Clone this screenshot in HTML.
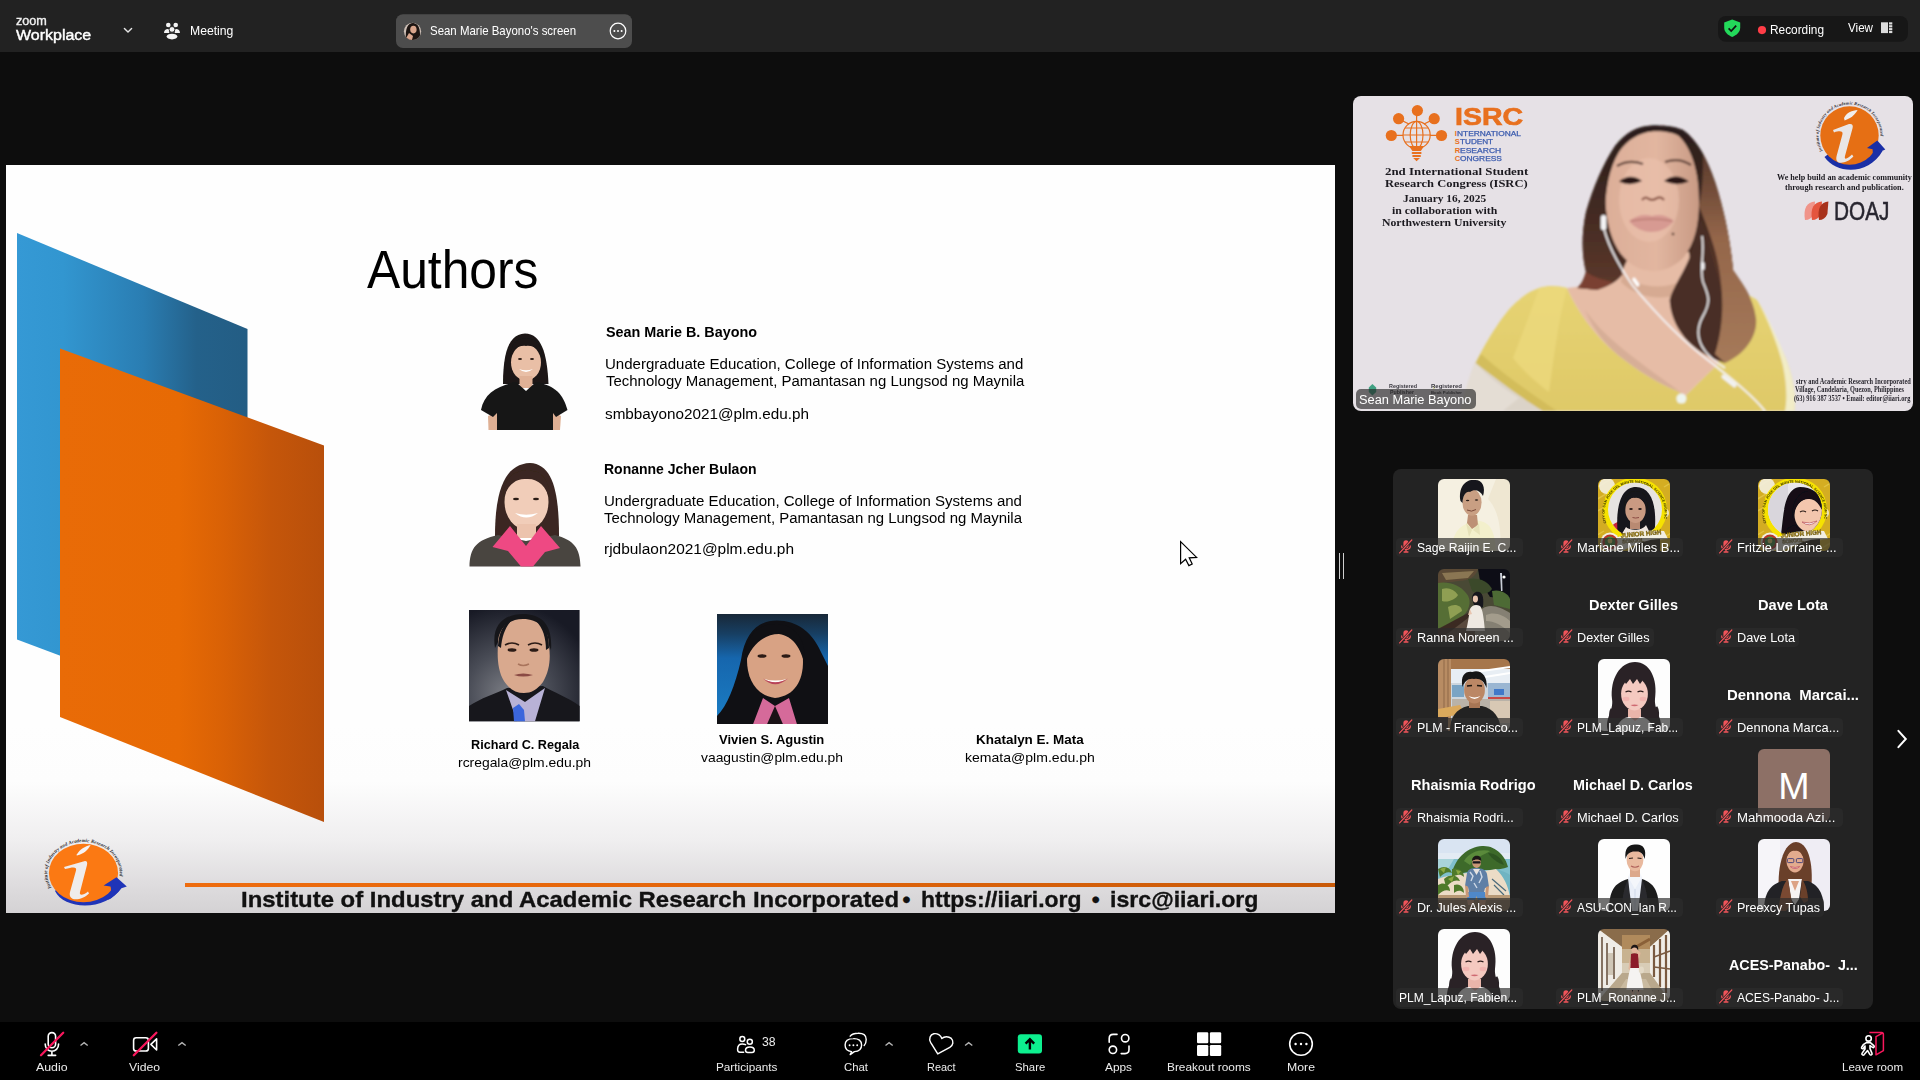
<!DOCTYPE html>
<html lang="en">
<head>
<meta charset="utf-8">
<title>Zoom Meeting</title>
<style>
*{margin:0;padding:0;box-sizing:border-box}
html,body{width:1920px;height:1080px;overflow:hidden;background:#0d0d0d;font-family:"Liberation Sans",sans-serif;color:#fff}
.abs,.t{position:absolute}
.t{white-space:pre;line-height:1;transform-origin:0 0}
#topbar{position:absolute;left:0;top:0;width:1920px;height:52px;background:#222222}
#bottombar{position:absolute;left:0;top:1022px;width:1920px;height:58px;background:#000}
#slide{position:absolute;left:6px;top:165px;width:1329px;height:748px;background:#fefefe;overflow:hidden;color:#000}
#speaker{position:absolute;left:1353px;top:96px;width:560px;height:315px;border-radius:8px;background:#e6e1e6;overflow:hidden;color:#000}
#gallery{position:absolute;left:1393px;top:469px;width:480px;height:540px;border-radius:8px;background:#232323}
.tile{position:absolute;width:160px;height:90px}
.av{position:absolute;left:45px;top:9.5px;width:72px;height:72px;border-radius:6px;overflow:hidden}
.lbl{position:absolute;left:3px;top:68.8px;height:19px;border-radius:4.5px;background:rgba(44,44,44,.68)}
.big{position:absolute;left:0;width:160px;top:27px;text-align:center;font-weight:bold;font-size:15px;line-height:18px;white-space:nowrap;color:#fff}
.bt{position:absolute;top:1061px;font-size:12.5px;line-height:14px;color:#e0e0e0;white-space:nowrap;text-align:center}
</style>
</head>
<body>
<!--TOPBAR-->
<div id="topbar">
<span class="t" style="left:15.80px;top:15px;font-size:12.9px;color:#f2f2f2;transform:scaleX(0.9800);-webkit-text-stroke:.35px #f2f2f2;">zoom</span>
<span class="t" style="left:15.80px;top:28px;font-size:14.9px;color:#fff;transform:scaleX(1.0731);-webkit-text-stroke:.4px #fff;">Workplace</span>
<svg class="abs" style="left:0;top:0" width="1920" height="52" viewBox="0 0 1920 52"><path d="M124.4 28.4 L128 32 L131.6 28.4" stroke="#e6e6e6" stroke-width="1.4" fill="none" stroke-linecap="round" stroke-linejoin="round"/><circle cx="168.3" cy="25" r="2.3" fill="#f4f4f4"/><circle cx="175.7" cy="25" r="2.3" fill="#f4f4f4"/><path d="M164 32.8 C164 30.4 165.6 29 168 29 C169 29 169.2 29.6 169 30.4 C168.8 31.6 169 32.4 169.6 33 H164.4Z M180 32.8 C180 30.4 178.4 29 176 29 C175 29 174.8 29.6 175 30.4 C175.2 31.6 175 32.4 174.4 33 H179.6Z" fill="#f4f4f4"/><circle cx="172" cy="29.4" r="2.9" fill="#f4f4f4" stroke="#222" stroke-width=".9"/><ellipse cx="172" cy="36.6" rx="5.4" ry="2.8" fill="#f4f4f4"/><rect x="396" y="14.2" width="236" height="33.8" rx="7" fill="#4d4d4d"/><clipPath id="avc"><circle cx="412.5" cy="31.3" r="8.6"/></clipPath><g clip-path="url(#avc)"><rect x="403" y="22" width="20" height="20" fill="#cdbfb6"/><path d="M406 40 C405 28 408 23 413 23 C418 23 420 28 420 34 L421 40Z" fill="#1d1512"/><ellipse cx="413.4" cy="29.6" rx="3.2" ry="3.8" fill="#d9a58c"/><path d="M405 40 L409 33 L413 36 L412 40Z" fill="#d9a58c"/></g><circle cx="618" cy="31" r="7.8" stroke="#fff" stroke-width="1.2" fill="none"/><circle cx="614.4" cy="31" r="1" fill="#fff"/><circle cx="618" cy="31" r="1" fill="#fff"/><circle cx="621.6" cy="31" r="1" fill="#fff"/><rect x="1718" y="16" width="190" height="25.8" rx="8" fill="#171717"/><path d="M1732.2 19.6 L1740.2 22.6 V27.6 C1740.2 32.2 1736.6 35.4 1732.2 36.9 C1727.8 35.4 1724.2 32.2 1724.2 27.6 V22.6Z" fill="#23d95a"/><path d="M1728.6 28.4 L1731.2 31 L1736.2 25.6" stroke="#111" stroke-width="1.7" fill="none"/><circle cx="1762" cy="30.1" r="4.1" fill="#ff3d47"/><rect x="1881" y="22.3" width="7" height="10.8" fill="#dcdcdc"/><rect x="1889" y="22.3" width="3.3" height="2.2" fill="#dcdcdc"/><rect x="1889" y="25.2" width="3.3" height="2.2" fill="#dcdcdc"/><rect x="1889" y="28.1" width="3.3" height="2.2" fill="#dcdcdc"/><rect x="1889" y="31" width="3.3" height="2.1" fill="#dcdcdc"/></svg>
<span class="t" style="left:190.40px;top:25px;font-size:12.8px;transform:scaleX(0.9532);">Meeting</span>
<span class="t" style="left:430.00px;top:25px;font-size:12.4px;transform:scaleX(0.9239);">Sean Marie Bayono's screen</span>
<span class="t" style="left:1770.00px;top:24px;font-size:12.6px;transform:scaleX(0.9407);">Recording</span>
<span class="t" style="left:1848.00px;top:22px;font-size:12.6px;transform:scaleX(0.9233);">View</span>
</div>
<!--SLIDE-->
<div id="slide">
<div class="abs" style="left:0;top:560px;width:1329px;height:188px;background:linear-gradient(#fefefe 0%,#fdfdfd 30%,#efeeef 62%,#dedcde 85%,#d4d2d4 100%)"></div>
<svg class="abs" style="left:0;top:0" width="340" height="748" viewBox="6 165 340 748">
<defs>
<linearGradient id="gb" x1="17" x2="247" y1="0" y2="0" gradientUnits="userSpaceOnUse"><stop offset="0" stop-color="#3599d5"/><stop offset=".2" stop-color="#3296d0"/><stop offset=".55" stop-color="#2a7db2"/><stop offset=".78" stop-color="#24618a"/><stop offset="1" stop-color="#235d84"/></linearGradient>
<linearGradient id="go" x1="60" x2="324" y1="0" y2="0" gradientUnits="userSpaceOnUse"><stop offset="0" stop-color="#e96b07"/><stop offset=".45" stop-color="#e76a04"/><stop offset=".62" stop-color="#d96106"/><stop offset=".8" stop-color="#c5560a"/><stop offset="1" stop-color="#b84f0b"/></linearGradient>
</defs>
<polygon points="17,233 247.5,329 247.5,726 17,639.5" fill="url(#gb)"/>
<polygon points="60,348.5 324,445.5 324,822 60,717" fill="url(#go)"/>
</svg>
<div class="abs" style="left:179px;top:717.8px;width:1150px;height:4.6px;background:linear-gradient(90deg,#ee6c0e,#e4660a 45%,#c95a08)"></div>
<span class="t" style="left:360.60px;top:78px;font-size:54.5px;transform:scaleX(0.9131);">Authors</span>
<span class="t" style="left:599.60px;top:159px;font-size:15.4px;font-weight:bold;transform:scaleX(0.9341);">Sean Marie B. Bayono</span>
<span class="t" style="left:599.40px;top:191px;font-size:15.4px;transform:scaleX(0.9778);">Undergraduate Education, College of Information Systems and</span>
<span class="t" style="left:599.60px;top:208px;font-size:15.4px;transform:scaleX(0.9719);">Technology Management, Pamantasan ng Lungsod ng Maynila</span>
<span class="t" style="left:599.40px;top:241px;font-size:15.4px;transform:scaleX(0.9922);">smbbayono2021@plm.edu.ph</span>
<span class="t" style="left:598.00px;top:296px;font-size:15.4px;font-weight:bold;transform:scaleX(0.9098);">Ronanne Jcher Bulaon</span>
<span class="t" style="left:598.00px;top:328px;font-size:15.4px;transform:scaleX(0.9771);">Undergraduate Education, College of Information Systems and</span>
<span class="t" style="left:598.00px;top:345px;font-size:15.4px;transform:scaleX(0.9712);">Technology Management, Pamantasan ng Lungsod ng Maynila</span>
<span class="t" style="left:598.00px;top:376px;font-size:15.4px;transform:scaleX(1.0035);">rjdbulaon2021@plm.edu.ph</span>
<span class="t" style="left:464.70px;top:573px;font-size:13.3px;font-weight:bold;transform:scaleX(0.9517);">Richard C. Regala</span>
<span class="t" style="left:452.30px;top:591px;font-size:13.3px;transform:scaleX(1.0445);">rcregala@plm.edu.ph</span>
<span class="t" style="left:713.35px;top:568px;font-size:13.3px;font-weight:bold;transform:scaleX(0.9761);">Vivien S. Agustin</span>
<span class="t" style="left:695.20px;top:586px;font-size:13.3px;transform:scaleX(1.0424);">vaagustin@plm.edu.ph</span>
<span class="t" style="left:970.35px;top:568px;font-size:13.3px;font-weight:bold;transform:scaleX(1.0122);">Khatalyn E. Mata</span>
<span class="t" style="left:959.30px;top:586px;font-size:13.3px;transform:scaleX(1.0561);">kemata@plm.edu.ph</span>
<span class="t" style="left:234.60px;top:724px;font-size:22.6px;font-weight:bold;color:#111;transform:scaleX(1.0581);-webkit-text-stroke:.35px #111;">Institute of Industry and Academic Research Incorporated</span>
<span class="t" style="left:896.40px;top:724px;font-size:22.6px;font-weight:bold;color:#111;-webkit-text-stroke:.35px #111;">•</span>
<span class="t" style="left:914.50px;top:724px;font-size:22.6px;font-weight:bold;color:#111;transform:scaleX(1.0148);-webkit-text-stroke:.35px #111;">https://iiari.org</span>
<span class="t" style="left:1085.80px;top:724px;font-size:22.6px;font-weight:bold;color:#111;-webkit-text-stroke:.35px #111;">•</span>
<span class="t" style="left:1104.00px;top:724px;font-size:22.6px;font-weight:bold;color:#111;transform:scaleX(1.0234);-webkit-text-stroke:.35px #111;">isrc@iiari.org</span>
<svg width="0" height="0" class="abs"><defs><filter id="soft2"><feGaussianBlur stdDeviation="0.45"/></filter></defs></svg><!-- Sean -->
<svg class="abs" style="left:474px;top:166px" width="90" height="100" viewBox="480 331 90 100"><g filter="url(#soft2)">
<path d="M503 384 C503 352 509 334 525 333.5 C541 334 547 352 548.5 384 Z" fill="#1a1413"/>
<ellipse cx="526" cy="362.5" rx="15" ry="18" fill="#e9bfa6"/>
<path d="M510 356 C512 340 520 338 526 339 C534 338 541 342 542.5 358 C540 350 534 345 526 346 C518 345 513 350 510 356Z" fill="#1a1413"/>
<rect x="519.5" y="376" width="13" height="12" fill="#e0b196"/>
<path d="M488 416 L497 412 L497 430 L488.5 430Z" fill="#dfb094"/><path d="M552.5 412 L561 416 L560 430 L552.5 430Z" fill="#dfb094"/>
<path d="M481 410 C484 394 496 386 516 382 L526 391 L536 382 C556 386 563 394 567.5 410 L556 417 L553 413 L553 430 L497 430 L497 413 L493 417Z" fill="#161618"/>
<path d="M519 369 Q526 375 533 369 Q526 371.5 519 369Z" fill="#fff"/>
<ellipse cx="520" cy="359" rx="2" ry="1" fill="#2a1a14"/><ellipse cx="532" cy="359" rx="2" ry="1" fill="#2a1a14"/>
</g></svg>
<!-- Ronanne -->
<svg class="abs" style="left:463px;top:297px" width="120" height="105" viewBox="469 462 120 105"><g filter="url(#soft2)">
<path d="M495 536 C495 490 505 464 530 463 C552 464 559 490 559 536 Z" fill="#3a2620"/>
<ellipse cx="526.5" cy="502" rx="22" ry="27.5" fill="#f1cdb9"/>
<path d="M503 500 C503 478 514 470 527 470.5 C542 470 550 480 550 500 C546 486 538 478 526 479 C514 478 506 488 503 500Z" fill="#3a2620"/>
<rect x="517" y="524" width="19" height="14" fill="#ecc3ad"/>
<path d="M469.5 566.5 C470 548 476 540 498 535 L526 541 L555 535 C574 540 580 548 580.5 566.5Z" fill="#4a4440"/>
<path d="M492.5 547 L510 526 L526 546 L541 526 L560 548 L545 552 L533 566.5 L521 566.5 L508 551Z" fill="#ee4a83"/>
<path d="M515 513 Q526 522 538 513 Q526 516.5 515 513Z" fill="#fff"/>
<ellipse cx="516" cy="499" rx="3" ry="1.3" fill="#2a1a14"/><ellipse cx="536" cy="499" rx="3" ry="1.3" fill="#2a1a14"/>
</g></svg>
<!-- Richard -->
<svg class="abs" style="left:463px;top:445.3px" width="110.6" height="111.3" viewBox="0 0 110.6 111.3">
<defs><radialGradient id="rg" cx=".35" cy=".75" r=".8"><stop offset="0" stop-color="#7b7d84"/><stop offset=".45" stop-color="#4a4d57"/><stop offset="1" stop-color="#181a25"/></radialGradient></defs>
<rect width="110.6" height="111.3" fill="url(#rg)"/>
<path d="M0 111.3 L0 96 C12 88 26 84 38 78 L74 76 C84 82 100 88 110.6 96 L110.6 111.3Z" fill="#17171c"/>
<path d="M37 80 L48 111.3 L66 111.3 L76 78 L56 92Z" fill="#b8b2d6"/>
<path d="M44 98 L50 94 L55 100 L56 111.3 L45 111.3Z" fill="#3b66dc"/>
<path d="M26 38 C22 14 36 4 54 4 C72 4 84 14 82 40 L78 30 C70 16 40 16 30 30Z" fill="#16161a"/>
<path d="M29 34 C29 18 40 9 54 9 C69 9 80 18 80 36 C82 50 80 62 74 72 C68 80 62 83 55 83 C47 83 40 79 35 71 C29 61 28 48 29 34Z" fill="#d9a98e"/>
<path d="M29 36 C30 22 34 14 42 11 C36 18 33 26 32 38Z" fill="#16161a"/><path d="M80 38 C80 22 76 14 67 11 C74 18 77 28 77 40Z" fill="#16161a"/>
<ellipse cx="43" cy="40" rx="4.5" ry="1.8" fill="#2b1b16"/><ellipse cx="65" cy="40" rx="4.5" ry="1.8" fill="#2b1b16"/>
<path d="M36 35 Q43 31 50 35" stroke="#2b1b16" stroke-width="1.6" fill="none"/><path d="M59 35 Q66 31 73 35" stroke="#2b1b16" stroke-width="1.6" fill="none"/>
<path d="M45 65 Q54 62 64 65 Q54 68 45 65Z" fill="#8a4a44"/>
<path d="M49 54 Q54 57 60 54" stroke="#a9745c" stroke-width="1.5" fill="none"/>
</svg>
<!-- Vivien -->
<svg class="abs" style="left:710.8px;top:449.2px" width="111" height="110.3" viewBox="0 0 111 110.3">
<defs><linearGradient id="vg" x1="0" y1="0" x2="0" y2="1"><stop offset="0" stop-color="#182838"/><stop offset=".18" stop-color="#173f63"/><stop offset=".4" stop-color="#1666ad"/><stop offset="1" stop-color="#1b7fc6"/></linearGradient></defs>
<rect width="111" height="110.3" fill="url(#vg)"/>
<path d="M0 110.3 L0 102 C10 92 18 72 24 46 C28 18 42 6.5 60 6.5 C80 6.5 94 18 102 34 C106 42 109 48 111 52 L111 110.3Z" fill="#101014"/>
<path d="M30 46 C30 24 42 14 58 14 C76 14 86 26 86 48 C86 66 78 82 58 84 C40 82 30 66 30 46Z" fill="#d8a284"/>
<path d="M28 50 C26 22 42 10 58 10 C76 10 90 22 88 52 C84 34 76 22 62 20 C48 20 34 30 28 50Z" fill="#101014"/>
<path d="M36 110.3 L46 84 L58 92 L72 84 L80 110.3Z" fill="#d56a9a"/>
<path d="M50 110.3 L58 92 L66 110.3Z" fill="#1a1216"/>
<path d="M47 65 Q58 72 70 65 Q58 68 47 65Z" fill="#fff"/><path d="M46 64.5 Q58 76 71 64.5 Q58 72 46 64.5Z" fill="#b8435a"/>
<ellipse cx="45" cy="42" rx="4.5" ry="1.8" fill="#2b1b16"/><ellipse cx="69" cy="42" rx="4.5" ry="1.8" fill="#2b1b16"/>
</svg>
<!-- IIARI logo -->
<svg class="abs" style="left:34px;top:665px" width="100" height="80" viewBox="40 830 100 80">
<path d="M55 891 C64 910 106 912 122 887 L112 880 C100 895 70 895 60 885Z" fill="#1f34b8"/>
<ellipse cx="83.5" cy="873" rx="34.6" ry="29.3" fill="#fb7913"/>
<path d="M116.5 877.2 L126.8 886.6 L121.4 888.2 C117 894 112 898 108 900 C110 896 112 891 110.5 886.4 L103.6 885.5Z" fill="#1f34b8"/>
<path d="M64 867 L85 861 C87 861 87.6 862.5 87 865 L80 892 C79 896 83 895.5 88 891.5 L89 893.5 C82 900.5 67.5 902.5 70 892 L76 870.5 C77 867 74 866.5 65 869Z" fill="#efecec"/>
<path d="M76.4 855 C80 849 85 846.5 90.6 845 C88 850 84 853.5 77 855.6Z" fill="#f6f3f3"/>
<path id="lgarc" d="M51.4 887.6 A36.3 31 0 1 1 119.4 877.3" fill="none"/>
<text font-family="'Liberation Serif',serif" font-style="italic" font-weight="bold" font-size="4.9" fill="#2a2a2e"><textPath href="#lgarc" textLength="124" lengthAdjust="spacing">Institute of Industry and Academic Research Incorporated</textPath></text>
</svg>
<svg class="abs" style="left:1172px;top:374px" width="22" height="30" viewBox="1178 539 22 30">
<path d="M1180.6 541.6 L1180.6 563.6 L1185.6 559.2 L1188.9 565.6 L1192.2 564 L1189.2 557.8 L1196.6 557.4Z" fill="#fff" stroke="#000" stroke-width="1.2" stroke-linejoin="miter"/>
</svg>
</div>
<!--SPEAKER-->
<div id="speaker">
<svg class="abs" style="left:0;top:0" width="560" height="315" viewBox="0 0 560 315"><defs>
<linearGradient id="hairg" x1="0" y1="0" x2="0" y2="1"><stop offset="0" stop-color="#2a1d1a"/><stop offset=".35" stop-color="#3a2620"/><stop offset=".7" stop-color="#4e3026"/><stop offset="1" stop-color="#5e3a2c"/></linearGradient>
<linearGradient id="skg" x1="0" y1="0" x2="1" y2="0"><stop offset="0" stop-color="#dcae98"/><stop offset=".55" stop-color="#e2b6a0"/><stop offset="1" stop-color="#c89a84"/></linearGradient>
<linearGradient id="topg" x1="0" y1="0" x2="0" y2="1"><stop offset="0" stop-color="#e6d373"/><stop offset="1" stop-color="#dfc968"/></linearGradient>
<linearGradient id="hairl" x1="0" y1="0" x2="0" y2="1"><stop offset="0" stop-color="#5a3a2c"/><stop offset=".4" stop-color="#94664a"/><stop offset="1" stop-color="#a67a5a"/></linearGradient>
<filter id="soft" x="-5%" y="-5%" width="110%" height="110%"><feGaussianBlur stdDeviation="0.9"/></filter>
</defs><g filter="url(#soft)"><path d="M300 29.5 C284 30 272 37 262 50 C250 68 240 92 233 116 C228 140 229 160 233 176 C230 186 227 190 224 192 L262 196 L300 180 L320 176 L316 204 C318 230 336 256 372 267 C392 258 405 240 403 222 C400 200 388 186 380 174 C378 150 372 116 362 86 C354 62 344 44 330 34 C320 30 310 29.5 300 29.5Z" fill="url(#hairg)"/><path d="M122 266 C118 276 114 290 107 315 L192 315 C170 303 146 285 122 266Z" fill="#dbd3c8"/><path d="M122 266 C134 280 150 292 166 302 L150 315 L107 315 C112 296 116 280 122 266Z" fill="#e4ddd4"/><path d="M186 192 C196 189 206 190 214 192 C224 214 240 238 265 259 C284 274 306 288 324.5 295 L332 300 C342 290 354 278 364 269 L384 198 C392 197 398 200 404 204 C412 216 420 234 433 263 C440 282 443 298 441.5 315 L190 315 C170 303 146 285 122.6 267 C134 244 152 214 166 204 C172 198 180 194 186 192Z" fill="url(#topg)"/><path d="M186 192 C180 210 170 236 160 262 C166 270 180 284 196 296 C200 270 204 230 214 192 C204 190 194 190 186 192Z" fill="#ecd97e" opacity=".75"/><path d="M122.6 267 C140 280 160 296 190 315 L204 315 C176 296 150 278 128 258Z" fill="#cdb654" opacity=".7"/><path d="M404 204 C414 222 424 246 430 270 C434 290 434 304 432 315 L441.5 315 C443 298 440 282 433 263 C422 236 412 216 404 204Z" fill="#f3f0d0" opacity=".92"/><path d="M214 192 C232 190 250 188 266 182 L276 160 L336 156 L340 186 C352 196 372 200 384 198 C380 226 372 250 364 269 C354 278 342 290 332 300 L324.5 295 C306 288 284 274 265 259 C240 238 224 214 214 192Z" fill="#e6bca6"/><path d="M270 176 C284 194 318 196 340 178 L340 190 C322 206 288 206 268 186Z" fill="#c99a82" opacity=".55"/><path d="M232 214 C250 240 280 262 322 292 L332 300 L324.5 295 C306 288 284 274 265 259 C250 246 240 232 232 214Z" fill="#c8a088" opacity=".5"/><path d="M252 100 C250 78 258 56 276 42 C288 34 314 33 326 40 C340 52 346 78 346 106 C346 128 342 148 330 162 C320 172 308 176 298 175 C284 174 272 166 264 152 C256 138 253 120 252 100Z" fill="url(#skg)"/><ellipse cx="296" cy="104" rx="30" ry="42" fill="#ecc3ae" opacity=".55"/><path d="M300 29.5 C284 30 272 37 262 50 C250 68 240 92 233 116 C228 140 229 160 233 176 C230 186 227 190 224 192 L244 194 C256 190 264 186 270 178 C262 166 256 150 253 128 C251 104 254 76 266 56 C274 44 286 37 300 35 C310 34 320 36 326 40 C336 50 342 66 345 84 C348 104 348 128 345 146 C343 158 340 170 340 186 C352 196 372 200 384 198 L380 174 C378 150 372 116 362 86 C354 62 344 44 330 34 C320 30 310 29.5 300 29.5Z" fill="url(#hairg)"/><path d="M342 140 C340 166 320 188 316.6 204 C318 230 336 256 372 267 C378 248 374 220 368 192 C364 172 354 150 348 122Z" fill="#4a2e25"/><path d="M346 110 C354 130 362 150 366 172 C370 196 372 226 362 258 L372 267 C392 258 405 240 403 222 C400 200 388 186 380 174 C378 150 372 116 362 86 C358 76 354 66 350 58 C350 76 350 94 346 110Z" fill="url(#hairl)"/><path d="M233 176 C231 184 228 189 224 192 L244 194 C250 192 256 189 260 186 C250 184 240 181 233 176Z" fill="#7a4030"/><path d="M264 70 Q276 63 290 68 M312 66 Q326 61 338 69" stroke="#4a3028" stroke-width="2.2" fill="none" opacity=".85"/><path d="M266 85.5 Q277 76.5 289 85 Q277 91 266 85.5Z M311 85 Q323 76 336 85.5 Q323 91 311 85Z" fill="#2a1916"/><path d="M289 104 Q292 100 296 103 Q300 105 304 102 Q308 100 311 104" stroke="#8a5444" stroke-width="2.2" fill="none"/><path d="M276 125 C284 119 292 118 299 120 C306 118 314 119 321 125 C314 133 306 136 298 136 C290 136 282 132 276 125Z" fill="#d79a92"/><path d="M278 125 Q299 121 319 125" stroke="#b07068" stroke-width="1.2" fill="none"/><circle cx="320" cy="138" r="1.3" fill="#3a2218"/><rect x="247.8" y="119" width="5.6" height="15" rx="2.8" fill="#f4f4f6"/><path d="M251 133 C256 152 266 170 280 190 C300 214 330 246 360 268 C380 284 400 300 412 315" stroke="#f6f6f8" stroke-width="1.7" fill="none"/><path d="M349 140 C352 158 346 172 350 186 C356 200 358 206 350 220 C340 238 346 256 372 272" stroke="#f6f6f8" stroke-width="1.6" fill="none"/><rect x="281" y="181" width="3.6" height="10" rx="1.8" transform="rotate(-35 283 186)" fill="#fff"/><rect x="348" y="166" width="3.6" height="8" rx="1.8" fill="#f4f4f6"/><circle cx="328.4" cy="302.6" r="5" fill="#eef4ee"/><rect x="374" y="276" width="4" height="18" rx="2" transform="rotate(-52 376 285)" fill="#f2f2f4"/></g><g stroke="#e8701e" stroke-width="1.2" fill="none"><circle cx="63.6" cy="39" r="13.6"/><ellipse cx="63.6" cy="39" rx="6.4" ry="13.6"/><path d="M50 39 H77.2 M63.6 25.4 V52.6 M52 32 H75.2 M52 46 H75.2"/><path d="M63.6 25 V16 M56 28 L47 23.6 M71 28 L80 23.6 M50 39.4 H40 M77 39.4 H87"/></g><circle cx="64.4" cy="14.6" r="5.6" fill="#e8701e"/><circle cx="45.6" cy="22.7" r="5.6" fill="#e8701e"/><circle cx="81.2" cy="22.7" r="5.6" fill="#e8701e"/><circle cx="38.3" cy="39.5" r="5.6" fill="#e8701e"/><circle cx="88.5" cy="39.5" r="5.6" fill="#e8701e"/><path d="M56 50 L59.4 55 H67.8 L71.2 50Z" fill="#e8701e"/><rect x="58.6" y="56" width="10" height="2" rx="1" fill="#e8701e"/><rect x="59.2" y="59" width="8.8" height="2" rx="1" fill="#e8701e"/><path d="M60.2 62 H67 L63.6 65.2Z" fill="#e8701e"/><path d="M471.5 61 C484 79 516 79 529.5 55 L520 48 C510 62 488 64 478 56Z" fill="#1a2fa6"/><circle cx="496.5" cy="39.5" r="29.2" fill="#e66f14"/><path d="M524.3 44.6 L532.3 53.4 L528.4 55.2 C525 61 521 65 516.4 67.6 C519 63 520.4 58 519.6 53.2 L514 52Z" fill="#1a2fa6"/><path d="M480 34 L496 28 C499 27.4 500.4 29 499.6 32 L492 60 C491 64 494 63.4 499 58.6 L500.4 60.6 C494 68 481 70 483.6 60 L489.4 38.6 C490.4 35 487 34.6 481 36.4Z" fill="#e9e6e6"/><path d="M491 22 C494 16 499 14.6 504.6 14 C502 18.6 498 22.4 491.6 24.4Z" fill="#f1eeee"/><path id="spArc" d="M469.65 55 A31 31 0 1 1 527.2 43.8" fill="none"/><text font-family="'Liberation Serif',serif" font-style="italic" font-weight="bold" font-size="4.3" fill="#2a2a30"><textPath href="#spArc" textLength="114" lengthAdjust="spacing">Institute of Industry and Academic Research Incorporated</textPath></text><path d="M452 124 C450 112 454 106 462 105.4 L461 118 C459 122 456 124 452 124Z" fill="#f0948a"/><path d="M459 124 C457 112 461 106 469 105.4 L468 118 C466 122 463 124 459 124Z" fill="#e4553e"/><path d="M466 124 C464 112 468 106 475.4 105.4 L474.4 118 C472.4 122 470 124 466 124Z" fill="#a8321c"/><path d="M19.4 288 L23.2 291.4 V296 L19.4 299.4 L15.8 296 V291.4Z" fill="#2f9a78" opacity=".9"/><path d="M80 290 l1.4 1.2 l-.6 1.6" stroke="#b8c850" stroke-width="1" fill="none"/></svg>
<span class="t" style="left:101.70px;top:9px;font-size:24.6px;font-weight:bold;color:#e8701e;transform:scaleX(1.1571);-webkit-text-stroke:.7px #e8701e;">ISRC</span>
<span class="t" style="left:101.70px;top:34px;font-size:7.6px;font-weight:bold;color:#e8701e;">I</span>
<span class="t" style="left:104.30px;top:35px;font-size:6.6px;color:#3c5cae;transform:scaleX(1.2669);-webkit-text-stroke:.25px #3c5cae;">NTERNATIONAL</span>
<span class="t" style="left:101.70px;top:42px;font-size:7.6px;font-weight:bold;color:#e8701e;">S</span>
<span class="t" style="left:107.30px;top:43px;font-size:6.6px;color:#3c5cae;transform:scaleX(1.2374);-webkit-text-stroke:.25px #3c5cae;">TUDENT</span>
<span class="t" style="left:101.70px;top:51px;font-size:7.6px;font-weight:bold;color:#e8701e;">R</span>
<span class="t" style="left:107.30px;top:52px;font-size:6.6px;color:#3c5cae;transform:scaleX(1.2919);-webkit-text-stroke:.25px #3c5cae;">ESEARCH</span>
<span class="t" style="left:101.70px;top:59px;font-size:7.6px;font-weight:bold;color:#e8701e;">C</span>
<span class="t" style="left:107.30px;top:60px;font-size:6.6px;color:#3c5cae;transform:scaleX(1.2703);-webkit-text-stroke:.25px #3c5cae;">ONGRESS</span>
<span class="t" style="left:31.90px;top:70px;font-size:11px;font-family:'Liberation Serif',serif;font-weight:bold;color:#1c1a20;transform:scaleX(1.1720);">2nd International Student</span>
<span class="t" style="left:32.20px;top:82px;font-size:11px;font-family:'Liberation Serif',serif;font-weight:bold;color:#1c1a20;transform:scaleX(1.1364);">Research Congress (ISRC)</span>
<span class="t" style="left:49.70px;top:98px;font-size:9.8px;font-family:'Liberation Serif',serif;font-weight:bold;color:#1c1a20;transform:scaleX(1.1610);">January 16, 2025</span>
<span class="t" style="left:38.80px;top:110px;font-size:9.8px;font-family:'Liberation Serif',serif;font-weight:bold;color:#1c1a20;transform:scaleX(1.2090);">in collaboration with</span>
<span class="t" style="left:29.30px;top:122px;font-size:9.8px;font-family:'Liberation Serif',serif;font-weight:bold;color:#1c1a20;transform:scaleX(1.1990);">Northwestern University</span>
<span class="t" style="left:423.80px;top:78px;font-size:7.6px;font-family:'Liberation Serif',serif;font-weight:bold;color:#1c1a20;transform:scaleX(1.0710);">We help build an academic community</span>
<span class="t" style="left:431.90px;top:88px;font-size:7.6px;font-family:'Liberation Serif',serif;font-weight:bold;color:#1c1a20;transform:scaleX(1.0777);">through research and publication.</span>
<span class="t" style="left:481.20px;top:103px;font-size:25px;color:#27252f;transform:scaleX(0.8322);-webkit-text-stroke:.5px #27252f;">DOAJ</span>
<span class="t" style="left:442.70px;top:282px;font-size:8.2px;font-family:'Liberation Serif',serif;font-weight:bold;color:#2a2830;transform:scaleX(0.7774);">stry and Academic Research Incorporated</span>
<span class="t" style="left:442.00px;top:290px;font-size:8.2px;font-family:'Liberation Serif',serif;font-weight:bold;color:#2a2830;transform:scaleX(0.7696);">Village, Candelaria, Quezon, Philippines</span>
<span class="t" style="left:440.50px;top:299px;font-size:8.2px;font-family:'Liberation Serif',serif;font-weight:bold;color:#2a2830;transform:scaleX(0.7736);">(63) 916 387 3537 • Email: editor@iiari.org</span>
<span class="t" style="left:35.80px;top:289px;font-size:4.6px;font-weight:bold;color:#3a3840;transform:scaleX(1.1789);">Registered</span>
<span class="t" style="left:36.60px;top:295px;font-size:4.6px;font-weight:bold;color:#3a3840;transform:scaleX(1.1463);">Publisher</span>
<span class="t" style="left:77.50px;top:289px;font-size:4.6px;font-weight:bold;color:#3a3840;transform:scaleX(1.3053);">Registered</span>
<span class="t" style="left:77.50px;top:295px;font-size:4.2px;font-weight:bold;color:#3a3840;transform:scaleX(1.0092);">Book Publisher</span>
<div class="abs" style="left:3px;top:293.2px;width:120px;height:19.6px;border-radius:5px;background:rgba(34,34,34,.64)"></div>
<span class="t" style="left:6.00px;top:298px;font-size:12.3px;color:#fff;transform:scaleX(1.0415);">Sean Marie Bayono</span>
</div>
<!--GALLERY-->
<div id="gallery">
<svg width="0" height="0" class="abs"><defs><filter id="soft3" x="-2%" y="-2%" width="104%" height="104%"><feGaussianBlur stdDeviation="0.4"/></filter></defs></svg>
<div class="tile" style="left:0px;top:0px"><div class="av"><svg width="72" height="72" viewBox="0 0 72 72" style="display:block;font-family:'Liberation Sans',sans-serif"><g filter="url(#soft3)"><rect width="72" height="72" fill="#f5f0e1"/>
<path d="M50 20 C60 30 64 50 62 72 L72 72 L72 0 L58 0Z" fill="#efe7d2"/>
<path d="M14 72 C14 58 18 50 28 45 L33 40 L42 42 C52 44 57 52 58 72Z" fill="#f3f0cc"/>
<path d="M30 36 L39 36 L40 46 L34 50 L29 44Z" fill="#bd9074"/>
<path d="M28 44 L34 51 L31 58Z M41 44 L35 51 L42 56Z" fill="#e6e2b8"/>
<ellipse cx="34" cy="23.5" rx="9.6" ry="13.2" fill="#c99f83"/>
<path d="M22.5 22 C20 8 28 0 36 1 C44 0 48 8 45 17 C42 11 36 10 32 13 C28 12 25 16 24.5 24Z" fill="#16161b"/>
<path d="M29 31 Q33.5 33.5 38 30.5" stroke="#7a4a3a" stroke-width="1" fill="none"/>
<ellipse cx="29.6" cy="21.5" rx="1.7" ry=".8" fill="#2a1c18"/><ellipse cx="38.5" cy="21" rx="1.7" ry=".8" fill="#2a1c18"/></g></svg></div><div class="lbl" style="width:127px"></div><div class="abs" style="left:4.5px;top:70px;width:15px;height:15px"><svg width="15" height="15" viewBox="0 0 15 15"><rect x="5.4" y="1.2" width="5.2" height="8.2" rx="2.6" fill="#f0545a"/><path d="M3.6 6.6 C3.6 12 12.4 12 12.4 6.6" stroke="#f0545a" stroke-width="1.2" fill="none"/><path d="M8 10.6 V12.6 M5.6 13 H10.4" stroke="#f0545a" stroke-width="1.3"/><path d="M1.8 13.8 L13.6 1.2" stroke="#232323" stroke-width="2.6"/><path d="M1.6 13.9 L13.8 1" stroke="#f0545a" stroke-width="1.2" stroke-linecap="round"/></svg></div><span class="t" style="left:24.30px;top:73px;font-size:12.3px;color:#fff;transform:scaleX(0.9882);">Sage Raijin E. C...</span></div>
<div class="tile" style="left:160px;top:0px"><div class="av"><svg width="72" height="72" viewBox="0 0 72 72" style="display:block;font-family:'Liberation Sans',sans-serif"><g filter="url(#soft3)"><rect width="72" height="72" fill="#d4ad22"/>
<g stroke="#e6c84a" stroke-width="1.4" opacity=".8"><path d="M-4 10 L20 -4 M-4 22 L40 -4 M40 76 L76 52 M52 76 L76 62 M-4 34 L10 26 M60 -4 L76 -12 M66 8 L76 2 M-4 58 L6 52"/></g>
<circle cx="9" cy="7" r="8" fill="#f3efe2" opacity=".9"/><circle cx="66" cy="34" r="5" fill="#f3efe2" opacity=".8"/>
<circle cx="37" cy="30.5" r="32" fill="#f6e200"/>
<clipPath id="c1"><circle cx="37" cy="30.5" r="27"/></clipPath>
<g clip-path="url(#c1)"><rect width="72" height="72" fill="#e6e3e1"/>
<path d="M10 60 C10 48 16 42 26 42 L30 60Z" fill="#c8283a"/>
<path d="M20 58 C17 30 22 8 38 8 C54 8 60 28 56 58Z" fill="#15131a"/>
<rect x="32" y="40" width="10" height="10" fill="#b98a72"/>
<ellipse cx="37.5" cy="31" rx="10.2" ry="13" fill="#c99a82"/>
<path d="M26 30 C26 16 32 12 38 12 C46 12 50 18 49.5 30 C46 22 42 18 37 19 C31 18 28 22 26 30Z" fill="#15131a"/>
<path d="M28 48 C32 52 44 52 48 46 L54 58 L22 58Z" fill="#efe6e0"/>
<ellipse cx="33" cy="30" rx="1.8" ry=".9" fill="#2a1c18"/><ellipse cx="42" cy="30" rx="1.8" ry=".9" fill="#2a1c18"/>
<path d="M34.5 38.5 Q37.5 39.6 41 38.5" stroke="#8a4a44" stroke-width="1" fill="none"/></g>
<path id="a1" d="M8.5 44 A30 30 0 1 1 66 40" fill="none"/>
<text font-size="3.6" font-weight="bold" fill="#3a3205" letter-spacing=".05"><textPath href="#a1">CITY OF SAN JOSE DEL MONTE NATIONAL SCIENCE HIGH SCHOOL</textPath></text>
<path d="M20 58 Q40 50 66 52 L70 60 Q46 60 24 72 L18 72Z" fill="#f3efe2"/>
<path d="M30 72 Q44 60 62 60 L62 72Z" fill="#2a2118"/>
<circle cx="12" cy="63" r="9.5" fill="#f3efe2"/><circle cx="12" cy="63" r="7.6" fill="#b7352b"/><circle cx="12" cy="63" r="5.4" fill="#3f8a3c"/><circle cx="12" cy="62" r="2.4" fill="#e8d36a"/>
<text x="22.5" y="57.2" font-size="6.4" font-weight="bold" fill="#c9a21c" stroke="#4a3a08" stroke-width=".35" transform="rotate(-5 40 56)" textLength="41" lengthAdjust="spacingAndGlyphs">JUNIOR HIGH</text>
<text x="24" y="63.2" font-size="5.2" font-weight="bold" fill="#d8c98a" stroke="#4a3a08" stroke-width=".3" transform="rotate(-5 40 62)">SCHOOL</text></g></svg></div><div class="lbl" style="width:127px"></div><div class="abs" style="left:4.5px;top:70px;width:15px;height:15px"><svg width="15" height="15" viewBox="0 0 15 15"><rect x="5.4" y="1.2" width="5.2" height="8.2" rx="2.6" fill="#f0545a"/><path d="M3.6 6.6 C3.6 12 12.4 12 12.4 6.6" stroke="#f0545a" stroke-width="1.2" fill="none"/><path d="M8 10.6 V12.6 M5.6 13 H10.4" stroke="#f0545a" stroke-width="1.3"/><path d="M1.8 13.8 L13.6 1.2" stroke="#232323" stroke-width="2.6"/><path d="M1.6 13.9 L13.8 1" stroke="#f0545a" stroke-width="1.2" stroke-linecap="round"/></svg></div><span class="t" style="left:24.30px;top:73px;font-size:12.3px;color:#fff;transform:scaleX(1.0487);">Mariane Miles B...</span></div>
<div class="tile" style="left:320px;top:0px"><div class="av"><svg width="72" height="72" viewBox="0 0 72 72" style="display:block;font-family:'Liberation Sans',sans-serif"><g filter="url(#soft3)"><rect width="72" height="72" fill="#d4ad22"/>
<g stroke="#e6c84a" stroke-width="1.4" opacity=".8"><path d="M-4 10 L20 -4 M-4 22 L40 -4 M40 76 L76 52 M52 76 L76 62 M-4 34 L10 26 M60 -4 L76 -12 M66 8 L76 2 M-4 58 L6 52"/></g>
<circle cx="9" cy="7" r="8" fill="#f3efe2" opacity=".9"/><circle cx="66" cy="34" r="5" fill="#f3efe2" opacity=".8"/>
<circle cx="37" cy="30.5" r="32" fill="#f6e200"/>
<clipPath id="c2"><circle cx="37" cy="30.5" r="27"/></clipPath>
<g clip-path="url(#c2)"><rect width="72" height="72" fill="#e9e6ea"/><rect x="8" y="0" width="22" height="60" fill="#d9d6dc"/>
<path d="M22 62 C26 40 24 10 42 8 C60 8 68 22 66 40 L60 60Z" fill="#121015"/>
<ellipse cx="51" cy="36" rx="14.5" ry="16.5" fill="#f3c6ad"/>
<path d="M34 40 C34 18 44 12 52 12 C62 12 68 20 66 36 C62 24 56 19 50 20 C42 20 37 28 34 40Z" fill="#121015"/>
<path d="M22 64 C26 52 32 46 38 46 L44 60Z" fill="#121015"/>
<path d="M44 43 Q51.5 49 59 42 Q51.5 45.5 44 43Z" fill="#fff" stroke="#b8505a" stroke-width=".7"/>
<path d="M42 33 Q45 31 48 33 M54 32 Q57 30 60 32" stroke="#2a1c18" stroke-width="1.1" fill="none"/></g>
<path id="a2" d="M8.5 44 A30 30 0 1 1 66 40" fill="none"/>
<text font-size="3.6" font-weight="bold" fill="#3a3205" letter-spacing=".05"><textPath href="#a2">CITY OF SAN JOSE DEL MONTE NATIONAL SCIENCE HIGH SCHOOL</textPath></text>
<path d="M20 58 Q40 50 66 52 L70 60 Q46 60 24 72 L18 72Z" fill="#f3efe2"/>
<path d="M30 72 Q44 60 62 60 L62 72Z" fill="#2a2118"/>
<circle cx="12" cy="63" r="9.5" fill="#f3efe2"/><circle cx="12" cy="63" r="7.6" fill="#b7352b"/><circle cx="12" cy="63" r="5.4" fill="#3f8a3c"/><circle cx="12" cy="62" r="2.4" fill="#e8d36a"/>
<text x="22.5" y="57.2" font-size="6.4" font-weight="bold" fill="#c9a21c" stroke="#4a3a08" stroke-width=".35" transform="rotate(-5 40 56)" textLength="41" lengthAdjust="spacingAndGlyphs">JUNIOR HIGH</text>
<text x="24" y="63.2" font-size="5.2" font-weight="bold" fill="#d8c98a" stroke="#4a3a08" stroke-width=".3" transform="rotate(-5 40 62)">SCHOOL</text></g></svg></div><div class="lbl" style="width:127px"></div><div class="abs" style="left:4.5px;top:70px;width:15px;height:15px"><svg width="15" height="15" viewBox="0 0 15 15"><rect x="5.4" y="1.2" width="5.2" height="8.2" rx="2.6" fill="#f0545a"/><path d="M3.6 6.6 C3.6 12 12.4 12 12.4 6.6" stroke="#f0545a" stroke-width="1.2" fill="none"/><path d="M8 10.6 V12.6 M5.6 13 H10.4" stroke="#f0545a" stroke-width="1.3"/><path d="M1.8 13.8 L13.6 1.2" stroke="#232323" stroke-width="2.6"/><path d="M1.6 13.9 L13.8 1" stroke="#f0545a" stroke-width="1.2" stroke-linecap="round"/></svg></div><span class="t" style="left:24.30px;top:73px;font-size:12.3px;color:#fff;transform:scaleX(1.0409);">Fritzie Lorraine ...</span></div>
<div class="tile" style="left:0px;top:90px"><div class="av"><svg width="72" height="72" viewBox="0 0 72 72" style="display:block;font-family:'Liberation Sans',sans-serif"><g filter="url(#soft3)"><rect width="72" height="72" fill="#4a4a36"/>
<path d="M40 0 L72 0 L72 30 L52 28 L42 12Z" fill="#0e0e16"/>
<path d="M0 0 L40 0 C38 8 30 12 20 12 C12 14 4 12 0 16Z" fill="#5a4a34"/><path d="M4 4 L36 2 L30 9 L8 11Z" fill="#8a7652"/>
<path d="M0 14 C10 12 22 16 28 24 C34 30 32 40 26 46 L6 60 L0 60Z" fill="#566e34"/>
<path d="M4 20 C10 18 16 20 20 26 C18 30 10 34 4 32Z M10 38 C16 34 24 36 24 42 L12 50Z" fill="#8f9f52"/>
<path d="M30 10 C40 8 50 12 54 20 C50 26 40 26 34 22Z" fill="#3a4a2a"/><path d="M54 22 C62 20 70 24 72 30 L72 40 L56 36Z" fill="#4d6a34"/>
<path d="M62 4 L64 4 L64.5 22 L63 22Z" fill="#c8ccd8"/><circle cx="66" cy="8" r="1.6" fill="#fff"/>
<path d="M34 72 L44 40 C52 34 62 38 72 44 L72 72Z" fill="#858073"/><path d="M48 46 C56 42 66 46 72 52 L72 64 C64 56 56 52 48 52Z" fill="#a39c8c"/>
<path d="M0 60 L30 44 L34 48 L4 72 L0 72Z" fill="#3a2c24"/><path d="M0 72 L34 46 L38 72Z" fill="#5a4a3c"/>
<path d="M34 30 C34 24 38 22 41 23 C45 24 46 30 45 38 L41 40 L36 36Z" fill="#17141a"/>
<ellipse cx="37.4" cy="30" rx="2.6" ry="3.4" fill="#e8c4ae"/>
<path d="M32 40 C34 36 38 35 42 37 C45 40 46 52 47 62 L28 62 C30 54 31 46 32 40Z" fill="#efe9e2"/>
<path d="M32 40 L30 46 L34 45Z" fill="#e8c4ae"/></g></svg></div><div class="lbl" style="width:127px"></div><div class="abs" style="left:4.5px;top:70px;width:15px;height:15px"><svg width="15" height="15" viewBox="0 0 15 15"><rect x="5.4" y="1.2" width="5.2" height="8.2" rx="2.6" fill="#f0545a"/><path d="M3.6 6.6 C3.6 12 12.4 12 12.4 6.6" stroke="#f0545a" stroke-width="1.2" fill="none"/><path d="M8 10.6 V12.6 M5.6 13 H10.4" stroke="#f0545a" stroke-width="1.3"/><path d="M1.8 13.8 L13.6 1.2" stroke="#232323" stroke-width="2.6"/><path d="M1.6 13.9 L13.8 1" stroke="#f0545a" stroke-width="1.2" stroke-linecap="round"/></svg></div><span class="t" style="left:24.30px;top:73px;font-size:12.3px;color:#fff;transform:scaleX(1.0336);">Ranna Noreen ...</span></div>
<div class="tile" style="left:160px;top:90px"><span class="t" style="left:35.50px;top:38px;font-size:15.4px;font-weight:bold;color:#fff;transform:scaleX(0.9457);">Dexter Gilles</span><div class="lbl" style="width:98px"></div><div class="abs" style="left:4.5px;top:70px;width:15px;height:15px"><svg width="15" height="15" viewBox="0 0 15 15"><rect x="5.4" y="1.2" width="5.2" height="8.2" rx="2.6" fill="#f0545a"/><path d="M3.6 6.6 C3.6 12 12.4 12 12.4 6.6" stroke="#f0545a" stroke-width="1.2" fill="none"/><path d="M8 10.6 V12.6 M5.6 13 H10.4" stroke="#f0545a" stroke-width="1.3"/><path d="M1.8 13.8 L13.6 1.2" stroke="#232323" stroke-width="2.6"/><path d="M1.6 13.9 L13.8 1" stroke="#f0545a" stroke-width="1.2" stroke-linecap="round"/></svg></div><span class="t" style="left:24.30px;top:73px;font-size:12.3px;color:#fff;transform:scaleX(1.0300);">Dexter Gilles</span></div>
<div class="tile" style="left:320px;top:90px"><span class="t" style="left:45.00px;top:38px;font-size:15.4px;font-weight:bold;color:#fff;transform:scaleX(0.9516);">Dave Lota</span><div class="lbl" style="width:83px"></div><div class="abs" style="left:4.5px;top:70px;width:15px;height:15px"><svg width="15" height="15" viewBox="0 0 15 15"><rect x="5.4" y="1.2" width="5.2" height="8.2" rx="2.6" fill="#f0545a"/><path d="M3.6 6.6 C3.6 12 12.4 12 12.4 6.6" stroke="#f0545a" stroke-width="1.2" fill="none"/><path d="M8 10.6 V12.6 M5.6 13 H10.4" stroke="#f0545a" stroke-width="1.3"/><path d="M1.8 13.8 L13.6 1.2" stroke="#232323" stroke-width="2.6"/><path d="M1.6 13.9 L13.8 1" stroke="#f0545a" stroke-width="1.2" stroke-linecap="round"/></svg></div><span class="t" style="left:24.30px;top:73px;font-size:12.3px;color:#fff;transform:scaleX(1.0346);">Dave Lota</span></div>
<div class="tile" style="left:0px;top:180px"><div class="av"><svg width="72" height="72" viewBox="0 0 72 72" style="display:block;font-family:'Liberation Sans',sans-serif"><g filter="url(#soft3)"><rect width="72" height="72" fill="#cdd6de"/>
<rect width="72" height="10" fill="#a6764c"/><rect x="0" y="0" width="13" height="72" fill="#b88c64"/><path d="M6 0 V60 M10 0 V60" stroke="#8f6844" stroke-width="1"/>
<rect x="13" y="10" width="59" height="14" fill="#e8eef4"/><path d="M30 14 L72 8 M34 20 L72 14" stroke="#fff" stroke-width="2"/>
<rect x="14" y="26" width="12" height="12" fill="#7aa4c4"/><rect x="50" y="24" width="22" height="16" fill="#9ab6d2"/><rect x="56" y="30" width="10" height="6" fill="#3f78c8"/><rect x="50" y="38" width="22" height="3" fill="#c84a44"/>
<rect x="14" y="40" width="58" height="32" fill="#b9b2a8"/><rect x="52" y="42" width="20" height="22" fill="#d8c8b4"/>
<path d="M0 50 L22 46 L26 54 L0 60Z" fill="#dba95c"/><rect x="0" y="58" width="10" height="14" fill="#3a3230"/>
<path d="M12 72 C12 58 18 50 30 47 L44 47 C56 50 62 58 63 72Z" fill="#242422"/>
<rect x="31" y="38" width="11" height="11" fill="#a87654"/>
<ellipse cx="36.5" cy="31" rx="10.4" ry="13.4" fill="#bb8765"/>
<path d="M24.5 28 C22 16 28 12 34 13 C42 10 50 16 48.5 29 C46 22 42 19 36 20 C30 19 27 22 24.5 28Z" fill="#121214"/>
<path d="M30.5 37 Q36.5 43 42.5 37 Q36.5 39.8 30.5 37Z" fill="#fff"/>
<path d="M29 27 L34 26.5 M39 26.5 L44 27" stroke="#1a1210" stroke-width="1.3"/></g></svg></div><div class="lbl" style="width:127px"></div><div class="abs" style="left:4.5px;top:70px;width:15px;height:15px"><svg width="15" height="15" viewBox="0 0 15 15"><rect x="5.4" y="1.2" width="5.2" height="8.2" rx="2.6" fill="#f0545a"/><path d="M3.6 6.6 C3.6 12 12.4 12 12.4 6.6" stroke="#f0545a" stroke-width="1.2" fill="none"/><path d="M8 10.6 V12.6 M5.6 13 H10.4" stroke="#f0545a" stroke-width="1.3"/><path d="M1.8 13.8 L13.6 1.2" stroke="#232323" stroke-width="2.6"/><path d="M1.6 13.9 L13.8 1" stroke="#f0545a" stroke-width="1.2" stroke-linecap="round"/></svg></div><span class="t" style="left:24.30px;top:73px;font-size:12.3px;color:#fff;transform:scaleX(1.0124);">PLM - Francisco...</span></div>
<div class="tile" style="left:160px;top:180px"><div class="av"><svg width="72" height="72" viewBox="0 0 72 72" style="display:block;font-family:'Liberation Sans',sans-serif"><g filter="url(#soft3)"><rect width="72" height="72" fill="#fdfdfd"/>
<path d="M10 72 C6 60 16 52 14 40 C12 20 22 3 37 3 C52 3 60 20 57 40 C56 52 66 60 62 72Z" fill="#2b2428"/>
<path d="M14 50 C10 56 16 60 12 66 M58 48 C62 54 57 60 61 66" stroke="#2b2428" stroke-width="3" fill="none"/>
<rect x="30" y="50" width="13" height="12" fill="#eab5aa"/>
<path d="M18 72 C20 62 26 58 32 58 L37 62 L42 58 C48 58 54 62 56 72Z" fill="#f3f1f2"/>
<ellipse cx="36.5" cy="35" rx="13.4" ry="16.4" fill="#f4c9c0"/>
<path d="M22 34 C20 16 28 9 37 9 C47 9 54 17 51.5 34 C50 26 48 22 45 21 L42 25 L39 20 L35 25 L32 20 L28 25 L26 22 C23 25 22.5 30 22 34Z" fill="#2b2428"/>
<path d="M32.5 46 Q36.5 48.4 40.5 46 Q36.5 44.8 32.5 46Z" fill="#cf6a72"/>
<path d="M27.5 33 Q30.5 31.4 33.5 33 M39.5 33 Q42.5 31.4 45.5 33" stroke="#2a1c18" stroke-width="1.3" fill="none"/>
<ellipse cx="28" cy="40" rx="3.4" ry="2.2" fill="#f0a9a6" opacity=".6"/><ellipse cx="45" cy="40" rx="3.4" ry="2.2" fill="#f0a9a6" opacity=".6"/></g></svg></div><div class="lbl" style="width:127px"></div><div class="abs" style="left:4.5px;top:70px;width:15px;height:15px"><svg width="15" height="15" viewBox="0 0 15 15"><rect x="5.4" y="1.2" width="5.2" height="8.2" rx="2.6" fill="#f0545a"/><path d="M3.6 6.6 C3.6 12 12.4 12 12.4 6.6" stroke="#f0545a" stroke-width="1.2" fill="none"/><path d="M8 10.6 V12.6 M5.6 13 H10.4" stroke="#f0545a" stroke-width="1.3"/><path d="M1.8 13.8 L13.6 1.2" stroke="#232323" stroke-width="2.6"/><path d="M1.6 13.9 L13.8 1" stroke="#f0545a" stroke-width="1.2" stroke-linecap="round"/></svg></div><span class="t" style="left:24.30px;top:73px;font-size:12.3px;color:#fff;transform:scaleX(0.9740);">PLM_Lapuz, Fab...</span></div>
<div class="tile" style="left:320px;top:180px"><span class="t" style="left:14.00px;top:38px;font-size:15.4px;font-weight:bold;color:#fff;transform:scaleX(0.9707);">Dennona  Marcai...</span><div class="lbl" style="width:127px"></div><div class="abs" style="left:4.5px;top:70px;width:15px;height:15px"><svg width="15" height="15" viewBox="0 0 15 15"><rect x="5.4" y="1.2" width="5.2" height="8.2" rx="2.6" fill="#f0545a"/><path d="M3.6 6.6 C3.6 12 12.4 12 12.4 6.6" stroke="#f0545a" stroke-width="1.2" fill="none"/><path d="M8 10.6 V12.6 M5.6 13 H10.4" stroke="#f0545a" stroke-width="1.3"/><path d="M1.8 13.8 L13.6 1.2" stroke="#232323" stroke-width="2.6"/><path d="M1.6 13.9 L13.8 1" stroke="#f0545a" stroke-width="1.2" stroke-linecap="round"/></svg></div><span class="t" style="left:24.30px;top:73px;font-size:12.3px;color:#fff;transform:scaleX(1.0476);">Dennona Marca...</span></div>
<div class="tile" style="left:0px;top:270px"><span class="t" style="left:17.70px;top:38px;font-size:15.4px;font-weight:bold;color:#fff;transform:scaleX(0.9461);">Rhaismia Rodrigo</span><div class="lbl" style="width:127px"></div><div class="abs" style="left:4.5px;top:70px;width:15px;height:15px"><svg width="15" height="15" viewBox="0 0 15 15"><rect x="5.4" y="1.2" width="5.2" height="8.2" rx="2.6" fill="#f0545a"/><path d="M3.6 6.6 C3.6 12 12.4 12 12.4 6.6" stroke="#f0545a" stroke-width="1.2" fill="none"/><path d="M8 10.6 V12.6 M5.6 13 H10.4" stroke="#f0545a" stroke-width="1.3"/><path d="M1.8 13.8 L13.6 1.2" stroke="#232323" stroke-width="2.6"/><path d="M1.6 13.9 L13.8 1" stroke="#f0545a" stroke-width="1.2" stroke-linecap="round"/></svg></div><span class="t" style="left:24.30px;top:73px;font-size:12.3px;color:#fff;transform:scaleX(1.0264);">Rhaismia Rodri...</span></div>
<div class="tile" style="left:160px;top:270px"><span class="t" style="left:20.10px;top:38px;font-size:15.4px;font-weight:bold;color:#fff;transform:scaleX(0.9338);">Michael D. Carlos</span><div class="lbl" style="width:127px"></div><div class="abs" style="left:4.5px;top:70px;width:15px;height:15px"><svg width="15" height="15" viewBox="0 0 15 15"><rect x="5.4" y="1.2" width="5.2" height="8.2" rx="2.6" fill="#f0545a"/><path d="M3.6 6.6 C3.6 12 12.4 12 12.4 6.6" stroke="#f0545a" stroke-width="1.2" fill="none"/><path d="M8 10.6 V12.6 M5.6 13 H10.4" stroke="#f0545a" stroke-width="1.3"/><path d="M1.8 13.8 L13.6 1.2" stroke="#232323" stroke-width="2.6"/><path d="M1.6 13.9 L13.8 1" stroke="#f0545a" stroke-width="1.2" stroke-linecap="round"/></svg></div><span class="t" style="left:24.30px;top:73px;font-size:12.3px;color:#fff;transform:scaleX(1.0490);">Michael D. Carlos</span></div>
<div class="tile" style="left:320px;top:270px"><div class="av" style="background:#8d7066"></div><span class="t" style="left:65.30px;top:29px;font-size:37.7px;color:#fff;">M</span><div class="lbl" style="width:127px"></div><div class="abs" style="left:4.5px;top:70px;width:15px;height:15px"><svg width="15" height="15" viewBox="0 0 15 15"><rect x="5.4" y="1.2" width="5.2" height="8.2" rx="2.6" fill="#f0545a"/><path d="M3.6 6.6 C3.6 12 12.4 12 12.4 6.6" stroke="#f0545a" stroke-width="1.2" fill="none"/><path d="M8 10.6 V12.6 M5.6 13 H10.4" stroke="#f0545a" stroke-width="1.3"/><path d="M1.8 13.8 L13.6 1.2" stroke="#232323" stroke-width="2.6"/><path d="M1.6 13.9 L13.8 1" stroke="#f0545a" stroke-width="1.2" stroke-linecap="round"/></svg></div><span class="t" style="left:24.30px;top:73px;font-size:12.3px;color:#fff;transform:scaleX(1.0743);">Mahmooda Azi...</span></div>
<div class="tile" style="left:0px;top:360px"><div class="av"><svg width="72" height="72" viewBox="0 0 72 72" style="display:block;font-family:'Liberation Sans',sans-serif"><g filter="url(#soft3)"><rect width="72" height="72" fill="#e3ebf4"/><rect y="0" width="72" height="14" fill="#d9e4f2"/>
<rect y="20" width="72" height="20" fill="#7fbfcc"/><path d="M0 20 H16 L10 30 L0 32Z" fill="#a9d4da"/>
<path d="M14 34 C18 18 30 8 44 7 C58 6 68 18 70 28 C60 32 50 30 40 32 C30 32 22 36 14 34Z" fill="#3c6a2c"/>
<path d="M26 22 C32 12 44 10 52 12 C46 16 38 18 32 26Z" fill="#5a8a3a"/><path d="M50 14 C58 14 64 20 66 26 C60 24 54 20 50 14Z" fill="#2f5524"/>
<path d="M0 40 C14 34 40 34 58 30 C66 34 70 44 72 60 L72 72 L0 72Z" fill="#ebdcc6"/>
<path d="M58 30 C64 32 70 34 72 36 L72 58 C70 46 66 38 58 30Z" fill="#6fb4c2"/><path d="M54 40 L68 52 M56 46 L66 56" stroke="#4a6a7a" stroke-width="1.2"/>
<g fill="#4f7a2c"><path d="M0 30 C6 26 12 28 14 34 C10 32 6 34 2 38Z"/><path d="M6 40 C12 34 20 36 22 42 C16 40 12 44 8 48Z"/><path d="M14 30 C20 28 26 32 26 38 C22 34 18 36 14 38Z"/><path d="M0 46 C6 42 12 46 12 52 C8 50 4 52 0 56Z"/><path d="M16 46 C22 44 26 48 26 54 C22 50 18 52 16 54Z"/></g>
<g fill="#8aa840"><path d="M2 30 L8 28 L6 34Z M10 40 L16 37 L14 43Z M18 31 L23 32 L20 36Z"/></g>
<rect y="56" width="72" height="6" fill="#b79974"/><rect y="61" width="72" height="11" fill="#8c7458"/>
<path d="M29 34 C30 30 34 29 38 29 C44 29 48 31 49 35 L51 48 L47 49 L46 53 L31 53 L30 48 L27 47Z" fill="#5f7fa6"/>
<path d="M32 33 L35 37 L33 42 M42 32 L44 38 L41 44 M36 44 L39 49" stroke="#cfd9e6" stroke-width="1.4" fill="none"/>
<path d="M35 30 L38.5 36 L42 30Z" fill="#e8e4e0"/>
<path d="M30 53 L47 53 L48 61 L40 61 L38.5 57 L37 61 L29 61Z" fill="#4f88c9"/>
<path d="M27 46 L30 48 L31 58 L28 58Z M48 48 L51 47 L50 58 L47 58Z" fill="#c99876"/>
<path d="M29 61 L36 61 L35 66 L30 66Z M41 61 L48 61 L47 66 L42 66Z" fill="#c99876"/>
<ellipse cx="38.6" cy="23.5" rx="4.4" ry="5.4" fill="#c99876"/><path d="M34 22 C34 18 37 16.5 39 16.8 C42 16.8 43.6 19 43.2 22 C41 20 37 20 34 22Z" fill="#1a1614"/>
<rect x="34.6" y="22.2" width="8" height="2.2" rx="1" fill="#15151a"/></g></svg></div><div class="lbl" style="width:127px"></div><div class="abs" style="left:4.5px;top:70px;width:15px;height:15px"><svg width="15" height="15" viewBox="0 0 15 15"><rect x="5.4" y="1.2" width="5.2" height="8.2" rx="2.6" fill="#f0545a"/><path d="M3.6 6.6 C3.6 12 12.4 12 12.4 6.6" stroke="#f0545a" stroke-width="1.2" fill="none"/><path d="M8 10.6 V12.6 M5.6 13 H10.4" stroke="#f0545a" stroke-width="1.3"/><path d="M1.8 13.8 L13.6 1.2" stroke="#232323" stroke-width="2.6"/><path d="M1.6 13.9 L13.8 1" stroke="#f0545a" stroke-width="1.2" stroke-linecap="round"/></svg></div><span class="t" style="left:24.30px;top:73px;font-size:12.3px;color:#fff;transform:scaleX(1.0232);">Dr. Jules Alexis ...</span></div>
<div class="tile" style="left:160px;top:360px"><div class="av"><svg width="72" height="72" viewBox="0 0 72 72" style="display:block;font-family:'Liberation Sans',sans-serif"><g filter="url(#soft3)"><rect width="72" height="72" fill="#fefefe"/>
<path d="M11 72 C11 52 16 44 30 40 L44 40 C56 44 61 52 61 72Z" fill="#1b1b1d"/>
<path d="M30 38 L44 38 L45 72 L31 72Z" fill="#e9eef8"/><path d="M30 38 L37 50 L44 38 L42 34 L32 34Z" fill="#f4f6fb"/><path d="M37 50 V72" stroke="#c8d2e4" stroke-width=".8"/>
<path d="M30 40 L34 72 L24 72 C24 58 26 48 30 40Z M44 40 L40 72 L50 72 C50 58 48 48 44 40Z" fill="#2a2a2d"/>
<rect x="32" y="28" width="10" height="10" fill="#dca88c"/>
<ellipse cx="37" cy="21" rx="8.4" ry="11.2" fill="#e9b99e"/>
<path d="M27.6 20 C26 8 32 5 38 5.5 C45 5 49 10 46.6 20 C45 14 42 12 38 12.5 C33 12 29 14 27.6 20Z" fill="#141416"/>
<path d="M33 27 Q37 29.4 41 27" stroke="#b0605a" stroke-width="1.1" fill="none"/>
<path d="M31 19.5 L35 19 M39.5 19 L43.5 19.5" stroke="#2a1c18" stroke-width="1.1"/></g></svg></div><div class="lbl" style="width:127px"></div><div class="abs" style="left:4.5px;top:70px;width:15px;height:15px"><svg width="15" height="15" viewBox="0 0 15 15"><rect x="5.4" y="1.2" width="5.2" height="8.2" rx="2.6" fill="#f0545a"/><path d="M3.6 6.6 C3.6 12 12.4 12 12.4 6.6" stroke="#f0545a" stroke-width="1.2" fill="none"/><path d="M8 10.6 V12.6 M5.6 13 H10.4" stroke="#f0545a" stroke-width="1.3"/><path d="M1.8 13.8 L13.6 1.2" stroke="#232323" stroke-width="2.6"/><path d="M1.6 13.9 L13.8 1" stroke="#f0545a" stroke-width="1.2" stroke-linecap="round"/></svg></div><span class="t" style="left:24.30px;top:73px;font-size:12.3px;color:#fff;transform:scaleX(0.9672);">ASU-CON_Ian R...</span></div>
<div class="tile" style="left:320px;top:360px"><div class="av"><svg width="72" height="72" viewBox="0 0 72 72" style="display:block;font-family:'Liberation Sans',sans-serif"><g filter="url(#soft3)"><rect width="72" height="72" fill="#efedf4"/><path d="M0 0 H22 V72 H0Z" fill="#f6f5f9"/>
<path d="M22 60 C18 40 22 4 38 3 C54 4 56 36 52 58 L44 64 L28 64Z" fill="#6b3f2a"/>
<path d="M6 72 C6 54 12 46 24 42 L50 42 C60 46 66 54 66 72Z" fill="#212125"/>
<path d="M30 40 L44 40 L41 60 L37 66 L33 60Z" fill="#f6f4f4"/><path d="M33 42 L37 52 L41 42Z" fill="#dca386"/>
<path d="M22 60 C24 50 26 44 30 40 L34 64 L28 72 L20 72Z" fill="#7a4a30"/><path d="M44 40 C48 46 50 54 50 62 L46 64 L42 58Z" fill="#6b3f2a"/>
<ellipse cx="37" cy="22" rx="8.6" ry="11.4" fill="#e3ab8e"/>
<path d="M27 26 C24 10 32 5 38 5 C46 5 50 12 47.4 26 C46 16 42 11 37 12 C32 11 28 16 27 26Z" fill="#6b3f2a"/>
<rect x="29.4" y="19.6" width="6.4" height="4" rx="1" fill="none" stroke="#3a3a78" stroke-width=".9"/><rect x="38.4" y="19.6" width="6.4" height="4" rx="1" fill="none" stroke="#3a3a78" stroke-width=".9"/>
<path d="M32.4 27.6 Q37 31.6 41.6 27.6 Q37 29.4 32.4 27.6Z" fill="#fff" stroke="#c0485a" stroke-width=".7"/></g></svg></div><div class="lbl" style="width:108px"></div><div class="abs" style="left:4.5px;top:70px;width:15px;height:15px"><svg width="15" height="15" viewBox="0 0 15 15"><rect x="5.4" y="1.2" width="5.2" height="8.2" rx="2.6" fill="#f0545a"/><path d="M3.6 6.6 C3.6 12 12.4 12 12.4 6.6" stroke="#f0545a" stroke-width="1.2" fill="none"/><path d="M8 10.6 V12.6 M5.6 13 H10.4" stroke="#f0545a" stroke-width="1.3"/><path d="M1.8 13.8 L13.6 1.2" stroke="#232323" stroke-width="2.6"/><path d="M1.6 13.9 L13.8 1" stroke="#f0545a" stroke-width="1.2" stroke-linecap="round"/></svg></div><span class="t" style="left:24.30px;top:73px;font-size:12.3px;color:#fff;transform:scaleX(1.0204);">Preexcy Tupas</span></div>
<div class="tile" style="left:0px;top:450px"><div class="av"><svg width="72" height="72" viewBox="0 0 72 72" style="display:block;font-family:'Liberation Sans',sans-serif"><g filter="url(#soft3)"><rect width="72" height="72" fill="#fdfdfd"/>
<path d="M10 72 C6 60 16 52 14 40 C12 20 22 3 37 3 C52 3 60 20 57 40 C56 52 66 60 62 72Z" fill="#2b2428"/>
<path d="M14 50 C10 56 16 60 12 66 M58 48 C62 54 57 60 61 66" stroke="#2b2428" stroke-width="3" fill="none"/>
<rect x="30" y="50" width="13" height="12" fill="#eab5aa"/>
<path d="M18 72 C20 62 26 58 32 58 L37 62 L42 58 C48 58 54 62 56 72Z" fill="#f3f1f2"/>
<ellipse cx="36.5" cy="35" rx="13.4" ry="16.4" fill="#f4c9c0"/>
<path d="M22 34 C20 16 28 9 37 9 C47 9 54 17 51.5 34 C50 26 48 22 45 21 L42 25 L39 20 L35 25 L32 20 L28 25 L26 22 C23 25 22.5 30 22 34Z" fill="#2b2428"/>
<path d="M32.5 46 Q36.5 48.4 40.5 46 Q36.5 44.8 32.5 46Z" fill="#cf6a72"/>
<path d="M27.5 33 Q30.5 31.4 33.5 33 M39.5 33 Q42.5 31.4 45.5 33" stroke="#2a1c18" stroke-width="1.3" fill="none"/>
<ellipse cx="28" cy="40" rx="3.4" ry="2.2" fill="#f0a9a6" opacity=".6"/><ellipse cx="45" cy="40" rx="3.4" ry="2.2" fill="#f0a9a6" opacity=".6"/></g></svg></div><div class="lbl" style="width:127px"></div><span class="t" style="left:6.20px;top:73px;font-size:12.3px;color:#fff;transform:scaleX(0.9824);">PLM_Lapuz, Fabien...</span></div>
<div class="tile" style="left:160px;top:450px"><div class="av"><svg width="72" height="72" viewBox="0 0 72 72" style="display:block;font-family:'Liberation Sans',sans-serif"><g filter="url(#soft3)"><rect width="72" height="72" fill="#d8ccb6"/>
<path d="M0 0 H72 L52 18 H24Z" fill="#8a6c4c"/><rect x="24" y="6" width="28" height="20" fill="#b08a5c"/><path d="M24 26 L52 10" stroke="#8a6038" stroke-width="3"/><rect x="24" y="20" width="28" height="14" fill="#c8b290"/>
<path d="M0 0 L24 18 V44 L0 72Z" fill="#efece6"/><path d="M52 18 L72 0 V72 L52 44Z" fill="#f1eee8"/>
<path d="M4 8 V62 M9 14 V56 M16 18 V50" stroke="#6a5442" stroke-width="1.6"/><rect x="10" y="24" width="5" height="22" fill="#cfc6b6"/>
<path d="M56 16 V48 M62 10 V58 M68 6 V64" stroke="#7a5a40" stroke-width="2.2"/><path d="M56 28 L72 22 M56 38 L72 40" stroke="#7a5a40" stroke-width="1.4"/>
<path d="M24 44 H52 L72 72 H0Z" fill="#b9a88c"/><path d="M28 50 H48 L60 72 H14Z" fill="#c9baa0"/>
<ellipse cx="36.4" cy="20.4" rx="3" ry="3.6" fill="#e2b69c"/><path d="M33 20 C33 16 36 15.4 38 16 C40.4 16.6 40.6 20 40 23 L38.6 19 C37 18 35 18.4 33 20Z" fill="#1d1718"/>
<path d="M39 20 L42.6 24 L41 30 L39 26Z" fill="#e2b69c"/>
<path d="M33 25 C35 24 38 24 40 25 L41 39 L32.4 39Z" fill="#8c1f2c"/>
<path d="M32.4 39 H41 C43 46 44.6 54 45.6 61 L28.4 61 C29.4 52 30.6 45 32.4 39Z" fill="#f5f3f1"/>
<path d="M32 28 L30.4 40 L32 41Z" fill="#e2b69c"/><ellipse cx="43.4" cy="41" rx="2.6" ry="3.4" fill="#e3d9c6"/>
<path d="M33 61 L35 66 L36 61 M39 61 L40 66 L42 61" stroke="#e2b69c" stroke-width="1.6"/></g></svg></div><div class="lbl" style="width:127px"></div><div class="abs" style="left:4.5px;top:70px;width:15px;height:15px"><svg width="15" height="15" viewBox="0 0 15 15"><rect x="5.4" y="1.2" width="5.2" height="8.2" rx="2.6" fill="#f0545a"/><path d="M3.6 6.6 C3.6 12 12.4 12 12.4 6.6" stroke="#f0545a" stroke-width="1.2" fill="none"/><path d="M8 10.6 V12.6 M5.6 13 H10.4" stroke="#f0545a" stroke-width="1.3"/><path d="M1.8 13.8 L13.6 1.2" stroke="#232323" stroke-width="2.6"/><path d="M1.6 13.9 L13.8 1" stroke="#f0545a" stroke-width="1.2" stroke-linecap="round"/></svg></div><span class="t" style="left:24.30px;top:73px;font-size:12.3px;color:#fff;transform:scaleX(0.9719);">PLM_Ronanne J...</span></div>
<div class="tile" style="left:320px;top:450px"><span class="t" style="left:15.60px;top:38px;font-size:15.4px;font-weight:bold;color:#fff;transform:scaleX(0.9296);">ACES-Panabo-  J...</span><div class="lbl" style="width:127px"></div><div class="abs" style="left:4.5px;top:70px;width:15px;height:15px"><svg width="15" height="15" viewBox="0 0 15 15"><rect x="5.4" y="1.2" width="5.2" height="8.2" rx="2.6" fill="#f0545a"/><path d="M3.6 6.6 C3.6 12 12.4 12 12.4 6.6" stroke="#f0545a" stroke-width="1.2" fill="none"/><path d="M8 10.6 V12.6 M5.6 13 H10.4" stroke="#f0545a" stroke-width="1.3"/><path d="M1.8 13.8 L13.6 1.2" stroke="#232323" stroke-width="2.6"/><path d="M1.6 13.9 L13.8 1" stroke="#f0545a" stroke-width="1.2" stroke-linecap="round"/></svg></div><span class="t" style="left:24.30px;top:73px;font-size:12.3px;color:#fff;transform:scaleX(0.9857);">ACES-Panabo- J...</span></div>
</div>
<div class="abs" id="splitter" style="left:1339px;top:553px;width:1px;height:26px;background:#cfcfcf"></div><div class="abs" style="left:1342.5px;top:553px;width:1px;height:26px;background:#cfcfcf"></div>
<svg class="abs" id="nextarrow" style="left:1890px;top:726px" width="24" height="26" viewBox="1890 726 24 26"><path d="M1898.4 730.8 L1905.8 739 L1898.4 747.2" stroke="#fff" stroke-width="2" fill="none" stroke-linecap="round" stroke-linejoin="miter"/></svg>
<!--BOTTOMBAR-->
<div id="bottombar">
<svg class="abs" style="left:0;top:0" width="1920" height="58" viewBox="0 1022 1920 58"><rect x="48.2" y="1032.6" width="7.4" height="15.2" rx="3.7" stroke="#fff" stroke-width="1.6" fill="none" stroke-linecap="round" stroke-linejoin="round"/><path d="M45.2 1044 C45.2 1053.6 58.6 1053.6 58.6 1044 M51.9 1051.3 V1055.4 M48.2 1055.4 H55.6" stroke="#fff" stroke-width="1.6" fill="none" stroke-linecap="round" stroke-linejoin="round"/><path d="M41 1055.2 L63.2 1032.8" stroke="#f8175c" stroke-width="2.3" stroke-linecap="round"/><path d="M80.5 1045.5 L84.1 1042.7 L87.7 1045.5" stroke="#b4b4b4" stroke-width="1.4" fill="none" stroke-linecap="butt" stroke-linejoin="miter"/><rect x="133.6" y="1037.8" width="14.8" height="13.2" rx="2.6" stroke="#fff" stroke-width="1.6" fill="none" stroke-linecap="round" stroke-linejoin="round"/><path d="M150.9 1044.4 L156.6 1038.9 V1050 Z" stroke="#fff" stroke-width="1.6" fill="none" stroke-linecap="round" stroke-linejoin="round"/><path d="M133.8 1055.2 L156.4 1032.8" stroke="#f8175c" stroke-width="2.3" stroke-linecap="round"/><path d="M178.3 1045.5 L182.0 1042.7 L185.7 1045.5" stroke="#b4b4b4" stroke-width="1.4" fill="none" stroke-linecap="butt" stroke-linejoin="miter"/><circle cx="742.3" cy="1039" r="2.45" stroke="#fff" stroke-width="1.5" fill="none" stroke-linecap="round" stroke-linejoin="round"/><circle cx="749.8" cy="1041.7" r="2.55" stroke="#fff" stroke-width="1.5" fill="none" stroke-linecap="round" stroke-linejoin="round"/><path d="M745.6 1044.6 C744.6 1044.1 743.4 1043.9 742.2 1043.9 C739.4 1043.9 737.7 1046 737.6 1049 C737.5 1051.2 738.4 1052.2 740 1052.2 H743.6" stroke="#fff" stroke-width="1.5" fill="none" stroke-linecap="round" stroke-linejoin="round"/><path d="M749.9 1046.9 C752.8 1046.9 754.3 1048.4 754.3 1050.2 C754.3 1051.6 753.4 1052.4 752 1052.4 H747.8 C746.4 1052.4 745.5 1051.6 745.5 1050.2 C745.5 1048.4 747 1046.9 749.9 1046.9Z" stroke="#fff" stroke-width="1.5" fill="none" stroke-linecap="round" stroke-linejoin="round"/><path d="M850.2 1036.2 C852 1033.8 855 1033.2 858 1033.2 C863.4 1033 866.2 1035.2 866.2 1039.4 C866.2 1042.2 865.6 1044 864.2 1045.4" stroke="#fff" stroke-width="1.4" fill="none" stroke-linecap="round" stroke-linejoin="round"/><path d="M853.3 1038.6 C858.6 1038.4 861.6 1040.8 861.6 1045 C861.6 1049.4 858.8 1051.4 854.4 1051.6 L850.2 1054.6 L851.6 1051.6 C847.4 1051.2 845.1 1049 845.1 1045 C845.1 1040.8 848 1038.6 853.3 1038.6Z" stroke="#fff" stroke-width="1.4" fill="none" stroke-linecap="round" stroke-linejoin="round"/><circle cx="849.6" cy="1045.2" r=".95" fill="#fff"/><circle cx="853.4" cy="1045.2" r=".95" fill="#fff"/><circle cx="857.2" cy="1045.2" r=".95" fill="#fff"/><path d="M885.5 1045.5 L889.1 1042.7 L892.7 1045.5" stroke="#b4b4b4" stroke-width="1.4" fill="none" stroke-linecap="butt" stroke-linejoin="miter"/><path transform="translate(940.4 1044) rotate(15) scale(1.08)" d="M0 9.5 L-9.2 0.8 C-11.8 -2 -11.4 -6 -8.4 -7.6 C-5.4 -9 -1.6 -8 0 -5.2 C1.6 -8 5.4 -9 8.4 -7.6 C11.4 -6 11.8 -2 9.2 0.8Z" stroke="#fff" stroke-width="1.35" fill="none" stroke-linejoin="round"/><path d="M965.1 1045.5 L968.7 1042.7 L972.3 1045.5" stroke="#b4b4b4" stroke-width="1.4" fill="none" stroke-linecap="butt" stroke-linejoin="miter"/><rect x="1017.8" y="1034.3" width="24.2" height="19.3" rx="3" fill="#0df08f"/><path d="M1029.9 1049.6 V1039.6 M1025.6 1043.6 L1029.9 1039.3 L1034.2 1043.6" stroke="#000" stroke-width="2.4" fill="none" stroke-linejoin="miter"/><circle cx="1125.2" cy="1038.2" r="3.7" stroke="#fff" stroke-width="1.6" fill="none" stroke-linecap="round" stroke-linejoin="round"/><circle cx="1112.9" cy="1049.8" r="3.7" stroke="#fff" stroke-width="1.6" fill="none" stroke-linecap="round" stroke-linejoin="round"/><path d="M1109.2 1042.2 V1038.4 C1109.2 1036 1110.8 1034.4 1113.2 1034.4 H1117" stroke="#fff" stroke-width="1.6" fill="none" stroke-linecap="round" stroke-linejoin="round"/><path d="M1129 1046 V1049.6 C1129 1052 1127.4 1053.6 1125 1053.6 H1121.2" stroke="#fff" stroke-width="1.6" fill="none" stroke-linecap="round" stroke-linejoin="round"/><rect x="1197.0" y="1032.2" width="11.3" height="11" rx="1.2" fill="#fff"/><rect x="1209.9" y="1032.2" width="11.3" height="11" rx="1.2" fill="#fff"/><rect x="1197.0" y="1045.0" width="11.3" height="11" rx="1.2" fill="#fff"/><rect x="1209.9" y="1045.0" width="11.3" height="11" rx="1.2" fill="#fff"/><circle cx="1301" cy="1044" r="11.3" stroke="#fff" stroke-width="1.6" fill="none" stroke-linecap="round" stroke-linejoin="round"/><circle cx="1295.6" cy="1044" r="1.2" fill="#fff"/><circle cx="1301" cy="1044" r="1.2" fill="#fff"/><circle cx="1306.4" cy="1044" r="1.2" fill="#fff"/><path d="M1869.4 1032.6 H1881.6 C1882.8 1032.6 1883.4 1033.2 1883.4 1034.4 V1050.6 L1876 1054.8 V1036.6 L1883 1032.9" stroke="#f8175c" stroke-width="1.5" fill="none" stroke-linejoin="round"/><circle cx="1868.6" cy="1038.4" r="2.7" stroke="#fff" stroke-width="1.6" fill="none" stroke-linecap="round" stroke-linejoin="round"/><path d="M1866.6 1042.4 C1864 1043.4 1862.4 1045.4 1861.6 1047.4 C1861.2 1048.6 1862.6 1049.2 1863.4 1048.2 L1865 1046 L1865 1049 L1862 1053.4 C1861.4 1054.8 1863.2 1055.6 1864.2 1054.6 L1867.6 1050.6 L1869.8 1054.4 C1870.6 1055.6 1872.6 1054.8 1872 1053.4 L1870 1048.6 V1045.6 L1872.6 1047.4 C1873.8 1048 1874.8 1046.6 1873.8 1045.6 L1870.4 1042.6Z" stroke="#fff" stroke-width="1.6" fill="none" stroke-linecap="round" stroke-linejoin="round"/></svg>
<span class="t" style="left:36.40px;top:40px;font-size:11.8px;color:#ececec;transform:scaleX(1.0468);">Audio</span>
<span class="t" style="left:129.20px;top:40px;font-size:11.8px;color:#ececec;transform:scaleX(1.0344);">Video</span>
<span class="t" style="left:715.60px;top:40px;font-size:11.8px;color:#ececec;transform:scaleX(0.9961);">Participants</span>
<span class="t" style="left:762.40px;top:14px;font-size:12px;color:#ececec;transform:scaleX(1.0180);">38</span>
<span class="t" style="left:844.00px;top:40px;font-size:11.8px;color:#ececec;transform:scaleX(0.9630);">Chat</span>
<span class="t" style="left:926.60px;top:40px;font-size:11.8px;color:#ececec;transform:scaleX(0.9245);">React</span>
<span class="t" style="left:1015.00px;top:40px;font-size:11.8px;color:#ececec;transform:scaleX(0.9592);">Share</span>
<span class="t" style="left:1105.40px;top:40px;font-size:11.8px;color:#ececec;transform:scaleX(1.0041);">Apps</span>
<span class="t" style="left:1167.30px;top:40px;font-size:11.8px;color:#ececec;transform:scaleX(1.0062);">Breakout rooms</span>
<span class="t" style="left:1287.20px;top:40px;font-size:11.8px;color:#ececec;transform:scaleX(1.0413);">More</span>
<span class="t" style="left:1841.60px;top:40px;font-size:11.8px;color:#ececec;transform:scaleX(0.9792);">Leave room</span>
</div>
</body>
</html>
